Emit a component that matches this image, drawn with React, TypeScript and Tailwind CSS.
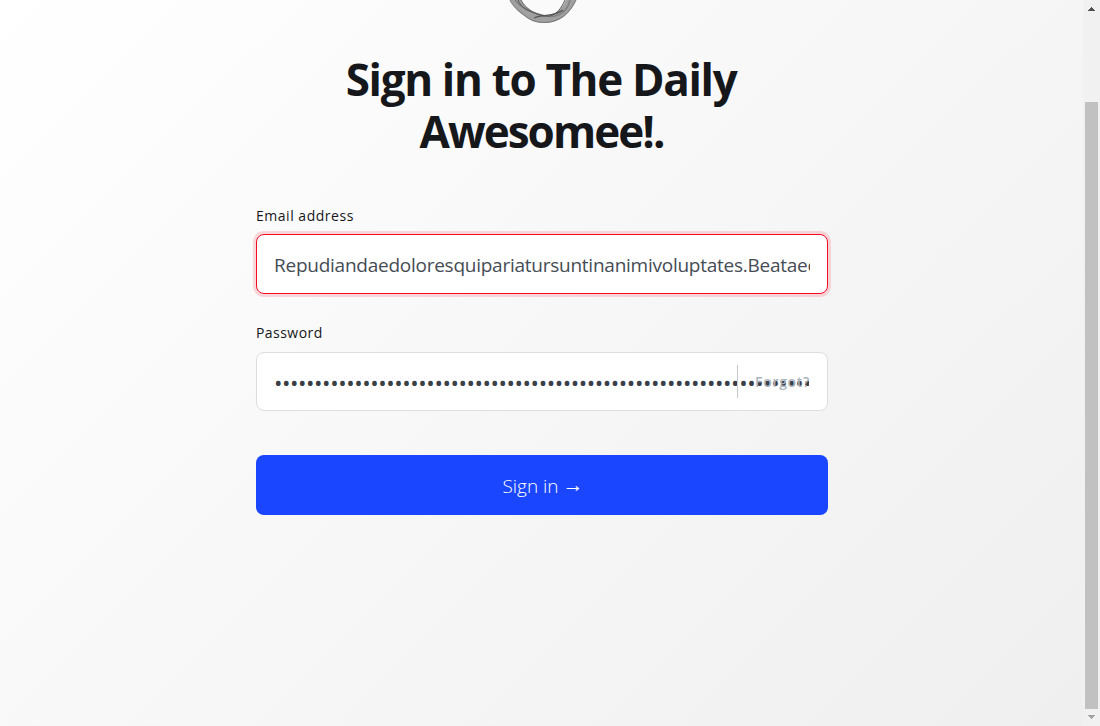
import React from 'react';

const email = 'Repudiandaedoloresquipariatursuntinanimivoluptates.Beataeconsequatur';
const password = 'x'.repeat(80);

function Logo() {
  return (
    <svg className="ml-[253px] block h-[25px] w-[70px] shrink-0" viewBox="0 0 70 25" fill="none">
      <path d="M1 0C5 7 8 11 14 15C20 20 27 23 36 23C51 23 62 13 67 0H57C53 9 46 15 38 16C27 15 17 9 12 0Z" fill="#a0a0a0" />
      <path d="M1 0C4 7 9 10 15 15C22 21 28 22.5 36 22.5C51 22 61 13 67 0" stroke="#777" />
      <path d="M6 0C12 8 20 11 29 14C37 17 46 18 53 13C58 9 60 5 61 0" stroke="#808080" strokeWidth="1.5" />
      <path d="M9 0C12 8 20 11 28 14C39 18 48 18 56 0" stroke="#555" />
      <path d="M12 0C16 8 24 13 34 16" stroke="#666" />
      <path d="M25 18C35 14 45 17 54 10" stroke="#555" strokeWidth="1.3" />
    </svg>
  );
}

function ScrollBar() {
  return (
    <div className="flex h-full w-[17px] shrink-0 flex-col items-center bg-[#f1f1f1]">
      <svg className="block h-[102px] w-[17px] shrink-0" viewBox="0 0 17 102" shapeRendering="crispEdges">
        <path d="M5 11V10H6V9H7V8H8V7H9V8H10V9H11V10H12V11Z" fill="#505050" />
      </svg>
      <div className="h-[607px] w-[13px] shrink-0 bg-[#c1c1c1]" />
      <svg className="block h-[17px] w-[17px] shrink-0" viewBox="0 0 17 17" shapeRendering="crispEdges">
        <path d="M5 6V7H6V8H7V9H8V10H9V9H10V8H11V7H12V6Z" fill="#a3a3a3" />
      </svg>
    </div>
  );
}

export default function App() {
  return (
    <div className="flex h-[726px] w-[1100px] overflow-hidden bg-white font-['Open_Sans','Noto_Sans',sans-serif] text-[#15171a]">
      <main className="h-full w-[1083px] bg-[linear-gradient(135deg,#ffffff_0%,#efefef_100%)] pl-64">
        <form className="flex w-[572px] flex-col" onSubmit={(e) => e.preventDefault()}>
          <Logo />
          <h1 className="mt-7 flex h-[105px] flex-col items-center text-[44px] leading-[52px] font-bold whitespace-nowrap">
            <span className="-ml-0.5 tracking-[-1.33px]">Sign in to The Daily</span>
            <span className="-ml-px tracking-[-1.95px]">Awesomee!.</span>
          </h1>
          <label htmlFor="email" className="mt-12 h-5 text-[14px] leading-5 font-medium tracking-[0.52px]">
            Email address
          </label>
          <input
            id="email"
            type="text"
            defaultValue={email}
            className="mt-2 h-[60px] w-full rounded-lg border border-[#f50b23] bg-white px-[17px] pt-0.5 text-[19px] font-normal tracking-[-0.25px] text-[#464c53] shadow-[0_0_0_3px_rgba(245,11,35,0.15)] outline-none"
          />
          <label htmlFor="password" className="mt-[29px] h-5 text-[14px] leading-5 font-medium tracking-[0.45px]">
            Password
          </label>
          <div className="relative mt-[9px] h-[59px]">
            <input
              id="password"
              type="password"
              defaultValue={password}
              className="h-full w-full rounded-lg border border-[#dddedf] bg-white pt-0.5 pr-[18px] pl-[17px] text-[22.5px] tracking-[-0.44px] text-[#394047] outline-none"
            />
            <div className="absolute top-[13px] right-[18px] flex h-[33px] w-[73px] items-center border-l border-[#c5c7c9] pl-[17px]">
              <span className="text-[14px] leading-none font-semibold tracking-[0.7px] text-[#abb4be]">Forgot?</span>
            </div>
          </div>
          <button
            type="submit"
            className="mt-11 flex h-[60px] w-full items-center justify-center gap-1 rounded-lg bg-[#1a46ff] pt-0.5 pl-0.5 text-[19px] font-light text-white"
          >
            <span>Sign in</span>
            <span className="-mt-0.5 font-['Liberation_Sans'] text-[21px] leading-5">→</span>
          </button>
        </form>
      </main>
      <ScrollBar />
    </div>
  );
}
